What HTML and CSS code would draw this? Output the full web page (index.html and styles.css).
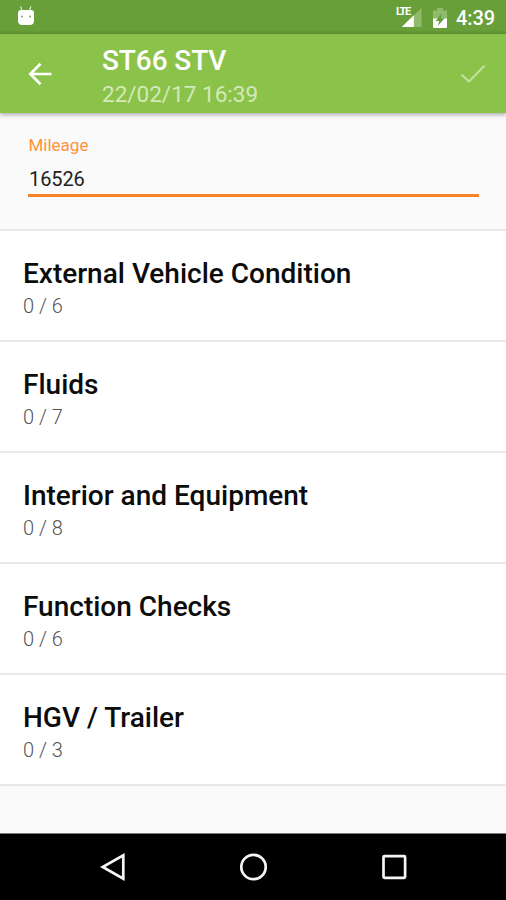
FILE: index.html
```html
<!DOCTYPE html>
<html lang="en">
<head>
<meta charset="utf-8">
<title>ST66 STV</title>
<link rel="stylesheet" href="styles.css">
</head>
<body>
<div class="screen">
  <header class="status">
    <svg class="droid" width="18" height="22" viewBox="0 0 18 22">
      <path d="M3.700 1.500 5 6M13.800 1.500 12.500 6" stroke="#dcebcf" stroke-width="1.200"/>
      <path d="M1 8Q1 5 4 5H14Q17 5 17 8V15.500Q17 20 12.500 20H5.500Q1 20 1 15.500Z" fill="#fff"/>
      <circle cx="5" cy="11.500" r="1" fill="#78a952"/><circle cx="13" cy="11.500" r="1" fill="#78a952"/>
    </svg>
    <div class="signal">
      <span class="lte">LTE</span>
      <svg width="21" height="20" viewBox="0 0 21 20">
        <path d="M20.500 0V19H.8Z" fill="#8fbb6b"/>
        <path d="M12.800 7.300V19H.8Z" fill="#fff"/>
      </svg>
    </div>
    <svg class="battery" width="14" height="21" viewBox="0 0 14 21">
      <path d="M4 0H10V2.500H14V11H0V2.500H4Z" fill="#8fbb6b"/>
      <path d="M0 10.500H14V19Q14 20 13 20H1Q0 20 0 19Z" fill="#fff"/>
      <path d="M8.800 5 2.700 13H6.200L4.800 18 11.500 10.300H7.800Z" fill="#659c39"/>
    </svg>
    <span class="clock">4:39</span>
  </header>
  <div class="toolbar">
    <svg class="back" width="24" height="24" viewBox="0 0 24 24"><path d="M23.500 12H2.500M12.500 1.800 2.300 12 12.500 22.200" fill="none" stroke="#fff" stroke-width="2.700"/></svg>
    <div class="titles">
      <h1>ST66 STV</h1>
      <p>22/02/17 16:39</p>
    </div>
    <svg class="check" width="26" height="20" viewBox="0 0 26 20"><path d="M1.500 10.500 9 17.500 24.500 1.700" fill="none" stroke="#c1e09c" stroke-width="2.300"/></svg>
  </div>
  <section class="mileage">
    <div class="field">
      <label>Mileage</label>
      <div class="value">16526</div>
    </div>
  </section>
  <main class="list">
    <div class="row"><h2>External Vehicle Condition</h2><p>0 / 6</p></div>
    <div class="row"><h2>Fluids</h2><p>0 / 7</p></div>
    <div class="row"><h2>Interior and Equipment</h2><p>0 / 8</p></div>
    <div class="row"><h2>Function Checks</h2><p>0 / 6</p></div>
    <div class="row"><h2>HGV / Trailer</h2><p>0 / 3</p></div>
  </main>
  <nav class="nav">
    <svg width="28" height="28" viewBox="0 0 28 28"><path d="M25.300 2.300V25.700L4.700 14Z"/></svg>
    <svg width="28" height="28" viewBox="0 0 28 28"><circle cx="14.500" cy="14" r="12.200"/></svg>
    <svg width="28" height="28" viewBox="0 0 28 28"><rect x="3.500" y="3.200" width="21.600" height="21.600" rx="1"/></svg>
  </nav>
</div>
</body>
</html>
```
FILE: styles.css
```css
* { box-sizing: border-box; margin: 0; padding: 0; }
body { font-family: Roboto, "Liberation Sans", sans-serif; background: #fafafa; }
svg { display: block; flex: none; }
.screen { width: 506px; height: 900px; display: flex; flex-direction: column; overflow: hidden; }
.status { height: 34px; background: linear-gradient(#689f38 30px, #5c9130 34px); display: flex; align-items: flex-start; padding: 0 11px 0 17px; flex: none; }
.droid { margin-top: 5px; margin-right: auto; }
.signal { display: flex; position: relative; padding-top: 8px; }
.lte { position: absolute; left: -5px; top: 6px; font-size: 11px; line-height: 12px; font-weight: 700; letter-spacing: -1.3px; color: #fff; }
.battery { margin: 8px 9px 0 11px; }
.clock { font-size: 20px; line-height: 24px; font-weight: 500; color: #fff; margin-top: 6px; letter-spacing: -0.1px; }
.toolbar { height: 79px; flex: none; background: #8bc34a; display: flex; position: relative; padding: 0 20px 0 28px; box-shadow: 0 2px 4px rgba(0, 0, 0, .3); }
.back { margin-top: 28px; }
.titles { margin-left: 50px; flex: 1; color: #fff; white-space: nowrap; }
.titles h1 { font-size: 28px; line-height: 32px; font-weight: 500; margin-top: 11px; letter-spacing: -0.1px; }
.titles p { font-size: 22.500px; line-height: 26px; margin-top: 4px; color: #d3e9b9; }
.check { margin-top: 30px; }
.mileage { height: 116px; flex: none; padding: 22px 27px 0 28px; }
.field { border-bottom: 3px solid #f58428; height: 62px; }
.field label { display: block; font-size: 17px; line-height: 20px; color: #ff933b; padding-left: 0.500px; }
.value { font-size: 20px; line-height: 24px; margin-top: 12px; padding-left: 1px; color: #212121; letter-spacing: -0.1px; }
.list { background: #fff; border-top: 2px solid #e8e8e8; }
.row { height: 111px; border-bottom: 2px solid #e8e8e8; padding: 26px 23px 0; white-space: nowrap; }
.row h2 { font-size: 28px; line-height: 34px; font-weight: 500; color: #0c0c0c; }
.row p { font-size: 20px; line-height: 24px; margin-top: 3px; color: #555; font-weight: 300; }
.nav { margin-top: auto; height: 67px; background: #000; border-top: 1px solid #777; display: flex; justify-content: space-between; align-items: center; padding: 0 98px; flex: none; }
.nav svg { fill: none; stroke: #f5f5f5; stroke-width: 2.700; }
```
